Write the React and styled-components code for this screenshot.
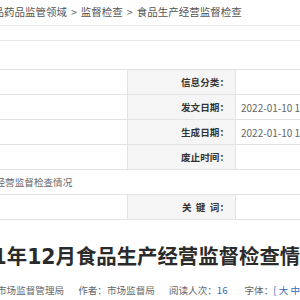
import styled, { createGlobalStyle } from "styled-components";

const GlobalStyle = createGlobalStyle`
  body {
    margin: 0;
    background: #ffffff;
    overflow: hidden;
    font-family: "Noto Sans CJK SC", "Liberation Sans", sans-serif;
  }
`;

// the shot is a crop of a wider page, so the page starts left of the window
const Page = styled.div`
  width: 670px;
  margin-left: -208px;
`;

const Breadcrumb = styled.div`
  height: 25px;
  padding-left: 191px;
  border-bottom: 1px solid #e8e8e8;
  font-size: 10.5px;
  line-height: 24px;
  color: #555;
  white-space: nowrap;
`;

const Sep = styled.span`
  margin: 0 4px;
`;

const Band = styled.div`
  height: 14px;
  border-bottom: 1px solid #e8e8e8;
`;

const InfoTable = styled.table`
  width: 670px;
  margin-top: 28px;
  border-collapse: collapse;
  table-layout: fixed;
  font-size: 9.6px;
`;

const Cell = styled.td`
  height: 24px;
  padding: 0 5px;
  border: 1px solid #e3e3e3;
  color: #666;
  font-size: ${(p) => (p.$date ? "10px" : "9.6px")};
  white-space: nowrap;
  overflow: hidden;
`;

const Label = styled(Cell)`
  text-align: right;
  padding-right: 6px;
  background: #f5f5f5;
  color: #333;
  font-weight: bold;
`;

const Title = styled.h1`
  margin: 22px 0 0;
  padding-left: 158px;
  font-family: "DejaVu Sans", "Noto Sans CJK SC", sans-serif;
  font-size: 20.4px;
  line-height: 30px;
  font-weight: bold;
  color: #2b2b2b;
  white-space: nowrap;
`;

const Meta = styled.div`
  display: flex;
  gap: 14px;
  margin-top: 10px;
  padding-left: 157px;
  font-size: 9.6px;
  line-height: 16px;
  color: #666;
  white-space: nowrap;
`;

const Blue = styled.span`
  color: #2f6db5;
`;

const FontSize = styled.span`
  margin-left: 3px;
`;

const rows = [
  ["索 引 号：", "", "信息分类：", ""],
  ["发文机关：", "", "发文日期：", "2022-01-10 10:32"],
  ["文　　号：", "", "生成日期：", "2022-01-10 10:32"],
  ["有 效 性：", "", "废止时间：", ""],
];

export default function App() {
  return (
    <Page>
      <GlobalStyle />
      <Breadcrumb>
        食品药品监管领域<Sep>&gt;</Sep>监督检查<Sep>&gt;</Sep>食品生产经营监督检查
      </Breadcrumb>
      <Band />
      <InfoTable>
        <colgroup>
          <col style={{ width: 108 }} />
          <col style={{ width: 227 }} />
          <col style={{ width: 108 }} />
          <col style={{ width: 227 }} />
        </colgroup>
        <tbody>
          {rows.map((r) => (
            <tr key={r[0]}>
              <Label>{r[0]}</Label>
              <Cell>{r[1]}</Cell>
              <Label>{r[2]}</Label>
              <Cell $date>{r[3]}</Cell>
            </tr>
          ))}
          <tr>
            <Label>名　　称：</Label>
            <Cell colSpan={3}>2021年12月食品生产经营监督检查情况</Cell>
          </tr>
          <tr>
            <Label>主题分类：</Label>
            <Cell></Cell>
            <Label>关&nbsp; 键&nbsp; 词：</Label>
            <Cell></Cell>
          </tr>
        </tbody>
      </InfoTable>
      <Title>2021年12月食品生产经营监督检查情况</Title>
      <Meta>
        <span>发布机构：市场监督管理局</span>
        <span>作者：市场监督局</span>
        <span>
          阅读人次：<Blue>16</Blue>
        </span>
        <FontSize>
          字体：<Blue>[ 大 中 小 ]</Blue>
        </FontSize>
      </Meta>
    </Page>
  );
}
